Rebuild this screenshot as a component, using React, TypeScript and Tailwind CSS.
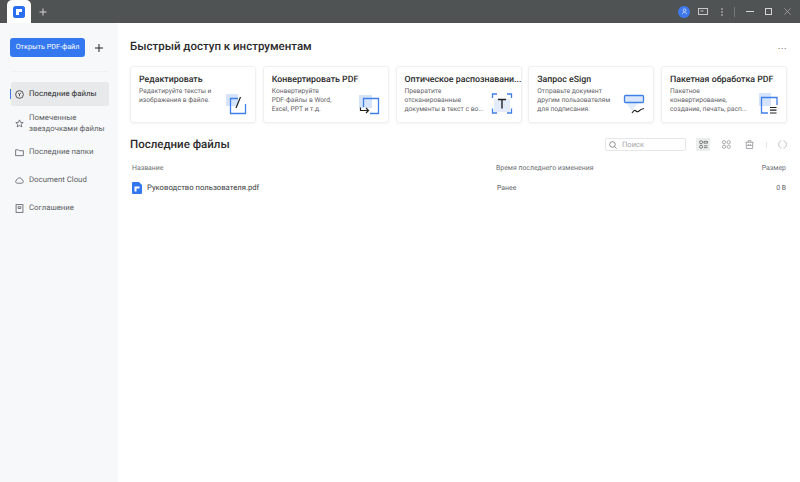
import React from "react";

const Card = ({ title, lines, icon }: { title: string; lines: string[]; icon: React.ReactNode }) => (
  <div className="relative w-[126px] h-[57px] bg-white rounded-[3px] border border-[#eef0f2] shadow-[0_1px_3px_rgba(0,0,0,0.05)] pt-[7px] pl-[8px]">
    <div className="text-[8.8px] leading-[13px] font-medium text-[#2b2b2b] whitespace-nowrap">{title}</div>
    <div className="text-[6.7px] leading-[9px] text-[#5f6266] whitespace-nowrap">
      {lines.map((l) => (
        <div key={l}>{l}</div>
      ))}
    </div>
    <div className="absolute right-[8px] bottom-[7px] w-[22px] h-[22px]">{icon}</div>
  </div>
);

const Nav = ({ active, icon, children, h = "h-[24px]" }: { active?: boolean; icon: React.ReactNode; children: React.ReactNode; h?: string }) => (
  <div className={`relative flex items-center gap-[5px] pl-[4px] ml-[1px] w-[98px] rounded-[2px] ${h} ${active ? "bg-[#e8e9eb] text-[#2b2b2b]" : "text-[#5c5f63]"}`}>
    {active && <div className="absolute left-[-1px] top-[7px] w-[1px] h-[10px] bg-[#3f78ea]" />}
    <div className="w-[9px] h-[9px] shrink-0">{icon}</div>
    <div className="text-[7.8px] leading-[11.500px]">{children}</div>
  </div>
);

const S = ({ children, c = "#5a5d61" }: { children: React.ReactNode; c?: string }) => (
  <svg viewBox="0 0 10 10" className="w-full h-full" fill="none" stroke={c} strokeWidth="0.9">
    {children}
  </svg>
);

export default function App() {
  return (
    <div className="w-[800px] h-[482px] overflow-hidden flex flex-col bg-white font-['Roboto',sans-serif] [text-rendering:geometricPrecision]">
      <div className="h-[23px] shrink-0 bg-[#505354] flex items-center relative">
        <div className="w-[24px] h-[23px] ml-[7px] bg-white rounded-t-[5px] flex items-center justify-center">
          <svg viewBox="0 0 12 12" className="w-[12px] h-[12px]">
            <rect width="12" height="12" rx="2.5" fill="#2a6ff0" />
            <path d="M3 3h6v3H6v3H3z" fill="#fff" />
          </svg>
        </div>
        <div className="ml-[8px] w-[8px] h-[8px]">
          <svg viewBox="0 0 8 8" className="w-full h-full" stroke="#d5d6d7" strokeWidth="1"><path d="M4 0.5v7M0.5 4h7" /></svg>
        </div>
        <div className="ml-auto flex items-center">
          <div className="w-[12px] h-[12px] rounded-full bg-[#3f78ea] flex items-center justify-center">
            <svg viewBox="0 0 8 8" className="w-[7px] h-[7px]" fill="none" stroke="#e8eefc" strokeWidth="0.8"><circle cx="4" cy="2.6" r="1.6" /><path d="M1.5 7c.4-1.6 1.4-2.2 2.500-2.200S6.100 5.400 6.500 7" /></svg>
          </div>
          <svg viewBox="0 0 10 7" className="ml-[8px] w-[10px] h-[7px]" fill="none" stroke="#d5d6d7" strokeWidth="0.9"><rect x="0.5" y="0.5" width="9" height="6" /><path d="M2.500 3h3" /></svg>
          <svg viewBox="0 0 2 8" className="ml-[13px] w-[2px] h-[8px]" fill="#d5d6d7"><circle cx="1" cy="1" r="0.8" /><circle cx="1" cy="4" r="0.8" /><circle cx="1" cy="7" r="0.8" /></svg>
          <div className="ml-[11px] w-[1px] h-[10px] bg-[#77797b]" />
          <div className="ml-[11px] w-[8px] h-[1px] bg-[#d5d6d7]" />
          <div className="ml-[11px] w-[7px] h-[7px] border border-[#d5d6d7]" />
          <svg viewBox="0 0 8 8" className="ml-[12px] mr-[9px] w-[7px] h-[7px]" stroke="#a9abad" strokeWidth="0.9"><path d="M0.500 0.500l7 7M7.500 0.500l-7 7" /></svg>
        </div>
      </div>
      <div className="flex-1 flex min-h-0">
        <aside className="w-[118px] shrink-0 bg-[#f7f8fa] flex flex-col pl-[10px]">
          <div className="mt-[15px] flex items-center">
            <div className="w-[75px] h-[19px] rounded-[3px] bg-[#3478f0] text-white text-[7.200px] flex items-center justify-center whitespace-nowrap">Открыть PDF-файл</div>
            <svg viewBox="0 0 8 8" className="ml-[10px] w-[8px] h-[8px]" stroke="#222" strokeWidth="1"><path d="M4 0v8M0 4h8" /></svg>
          </div>
          <div className="mt-[14px] w-[98px] h-[1px] bg-[#f0f1f3]" />
          <div className="mt-[10px] flex flex-col gap-[4px]">
            <Nav active icon={<S c="#333"><circle cx="5" cy="5" r="4.300" /><path d="M3.500 3.200L5 5l1.500-1.800M5 5v2" /></S>}>Последние файлы</Nav>
            <Nav h="h-[26px]" icon={<S><path d="M5 1l1.200 2.700 2.900.3-2.200 1.900.7 2.900L5 7.300 2.400 8.800l.7-2.900L.9 4l2.900-.3z" /></S>}>
              <div className="whitespace-nowrap">Помеченные</div>
              <div className="whitespace-nowrap">звездочками файлы</div>
            </Nav>
            <Nav icon={<S><path d="M.7 2h3l1 1h4.600v5.500H.7z" /></S>}>Последние папки</Nav>
            <Nav icon={<S><path d="M2.700 8C1.500 8 .7 7.200 .7 6.100c0-1 .7-1.800 1.600-1.900C2.500 2.900 3.600 2 5 2c1.400 0 2.500 1 2.700 2.200 1 .1 1.600 .9 1.600 1.900C9.300 7.200 8.500 8 7.300 8z" /></S>}>Document Cloud</Nav>
            <Nav icon={<S><rect x="1.200" y="0.700" width="7.600" height="8.600" /><path d="M3.500 3h3v2h-3z" /></S>}>Соглашение</Nav>
          </div>
        </aside>
        <main className="flex-1 min-w-0 pl-[12px] pr-[13px]">
          <div className="mt-[15px] flex items-start justify-between">
            <h1 className="text-[11.500px] leading-[17px] font-medium text-[#2b2b2b]">Быстрый доступ к инструментам</h1>
            <div className="text-[9px] leading-[8px] text-[#555] mt-[5px] tracking-[0.6px]">...</div>
          </div>
          <div className="mt-[11px] flex justify-between">
            <Card title="Редактировать" lines={["Редактируйте тексты и", "изображения в файле."]} icon={
              <svg viewBox="0 0 22 22" className="w-full h-full" fill="none"><rect x="1" y="1" width="12" height="12" fill="#d5e3fb" /><path d="M13 5.500H5.500V20.500H20.500V11" stroke="#3f7fe8" strokeWidth="1.300" /><path d="M11 15l4.500-11" stroke="#222" strokeWidth="1.200" /></svg>
            } />
            <Card title="Конвертировать PDF" lines={["Конвертируйте", "PDF-файлы в Word,", "Excel, PPT и т.д."]} icon={
              <svg viewBox="0 0 22 22" className="w-full h-full" fill="none"><rect x="1" y="2" width="13" height="13" fill="#d5e3fb" /><path d="M5.500 14V5.500H20.500V20.500H12" stroke="#3f7fe8" strokeWidth="1.300" /><path d="M2.500 14.500V17.500H10.500M8 15l2.500 2.500L8 20" stroke="#222" strokeWidth="1.200" /></svg>
            } />
            <Card title="Оптическое распознавани..." lines={["Превратите", "отсканированные", "документы в текст с во..."]} icon={
              <svg viewBox="0 0 22 22" className="w-full h-full" fill="none"><rect x="3" y="6" width="16" height="13" fill="#e4ecfb" /><path d="M1.500 5V1H6M16 1h4.500V5M1.500 15.500V20H6M16 20h4.500V15.500" stroke="#3f7fe8" strokeWidth="1.300" /><path d="M7 6.500h8M11 6.500V15.500" stroke="#222" strokeWidth="1.400" /></svg>
            } />
            <Card title="Запрос eSign" lines={["Отправьте документ", "другим пользователям", "для подписания."]} icon={
              <svg viewBox="0 0 22 22" className="w-full h-full" fill="none"><path d="M3 10h12l-6 8z" fill="#e4ecfb" /><rect x="1.500" y="2.500" width="19" height="7" rx="1" fill="#dbe7fb" stroke="#3f7fe8" strokeWidth="1.300" /><path d="M9 20c2-3 3-3 4-2s2 1 3 0 2-2 5-2.500" stroke="#222" strokeWidth="1.100" /></svg>
            } />
            <Card title="Пакетная обработка PDF" lines={["Пакетное", "конвертирование,", "создание, печать, расп..."]} icon={
              <svg viewBox="0 0 22 22" className="w-full h-full" fill="none"><rect x="3" y="0" width="12" height="13" fill="#d5e3fb" /><path d="M21 12V4.500H5.500V20H12" stroke="#3f7fe8" strokeWidth="1.300" /><path d="M14 14.500h6.500M14 17.200h6.500M14 20h6.500" stroke="#222" strokeWidth="1.200" /></svg>
            } />
          </div>
          <div className="mt-[13px] flex items-center">
            <h2 className="text-[11.500px] leading-[17px] font-medium text-[#2b2b2b]">Последние файлы</h2>
            <div className="ml-auto w-[81px] h-[13px] rounded-[2px] border border-[#e6e7e9] flex items-center pl-[3px]">
              <svg viewBox="0 0 10 10" className="w-[8px] h-[8px]" fill="none" stroke="#666" strokeWidth="0.900"><circle cx="4.300" cy="4.300" r="3.500" /><path d="M7 7l2.500 2.500" /></svg>
              <span className="ml-[5px] text-[7.500px] leading-[10px] text-[#a2a4a7]">Поиск</span>
            </div>
            <div className="ml-[10px] w-[14px] h-[13px] bg-[#eceded] flex items-center justify-center">
              <svg viewBox="0 0 10 10" className="w-[9px] h-[9px]" fill="none" stroke="#555" strokeWidth="0.800"><circle cx="2.300" cy="2.500" r="1.700" /><circle cx="2.300" cy="7.500" r="1.700" /><path d="M5.500 1.500h4v2h-4zM5.500 6.500h4M5.500 8.500h4" /></svg>
            </div>
            <svg viewBox="0 0 10 10" className="ml-[12px] w-[9px] h-[9px]" fill="none" stroke="#8a8c8f" strokeWidth="0.800"><circle cx="2.300" cy="2.500" r="1.800" /><circle cx="7.500" cy="2.500" r="1.800" /><circle cx="2.300" cy="7.500" r="1.800" /><circle cx="7.500" cy="7.500" r="1.800" /></svg>
            <svg viewBox="0 0 10 10" className="ml-[14px] w-[9px] h-[9px]" fill="none" stroke="#8a8c8f" strokeWidth="0.800"><path d="M0.500 2.500h9M3.500 2.500V.7h3v1.800M1.500 2.500v7h7v-7M1.500 6h7M4 4.500v1.500M6 4.500v1.500" /></svg>
            <div className="ml-[12px] w-[1px] h-[6px] bg-[#e3e4e6]" />
            <svg viewBox="0 0 10 10" className="ml-[11px] w-[9px] h-[9px]" fill="none" stroke="#a2a4a7" strokeWidth="0.800"><path d="M3.800 .9C2 1.400 .7 3 .7 5s1.300 3.600 3.100 4.100M6.200 .9C8 1.400 9.300 3 9.300 5S8 8.600 6.200 9.100" /></svg>
          </div>
          <div className="mt-[10px] flex items-center text-[6.900px] leading-[10px] text-[#6c6f73] pl-[2px]">
            <div className="w-[364px]">Название</div>
            <div className="flex-1">Время последнего изменения</div>
            <div className="pr-[1px]">Размер</div>
          </div>
          <div className="mt-[9px] flex items-center">
            <svg viewBox="0 0 10 12" className="ml-[2px] w-[10px] h-[12px]"><path d="M1 0h6l3 3v8a1 1 0 0 1-1 1H1a1 1 0 0 1-1-1V1a1 1 0 0 1 1-1z" fill="#3478f0" /><path d="M2.500 4.500h5v2H4.500v3h-2z" fill="#fff" /></svg>
            <div className="ml-[5px] w-[350px] text-[7.700px] leading-[12px] text-[#3a3c3f]">Руководство пользователя.pdf</div>
            <div className="flex-1 text-[6.900px] leading-[10px] text-[#5c5f63]">Ранее</div>
            <div className="text-[6.900px] leading-[10px] text-[#5c5f63] pr-[1px]">0 B</div>
          </div>
        </main>
      </div>
    </div>
  );
}
